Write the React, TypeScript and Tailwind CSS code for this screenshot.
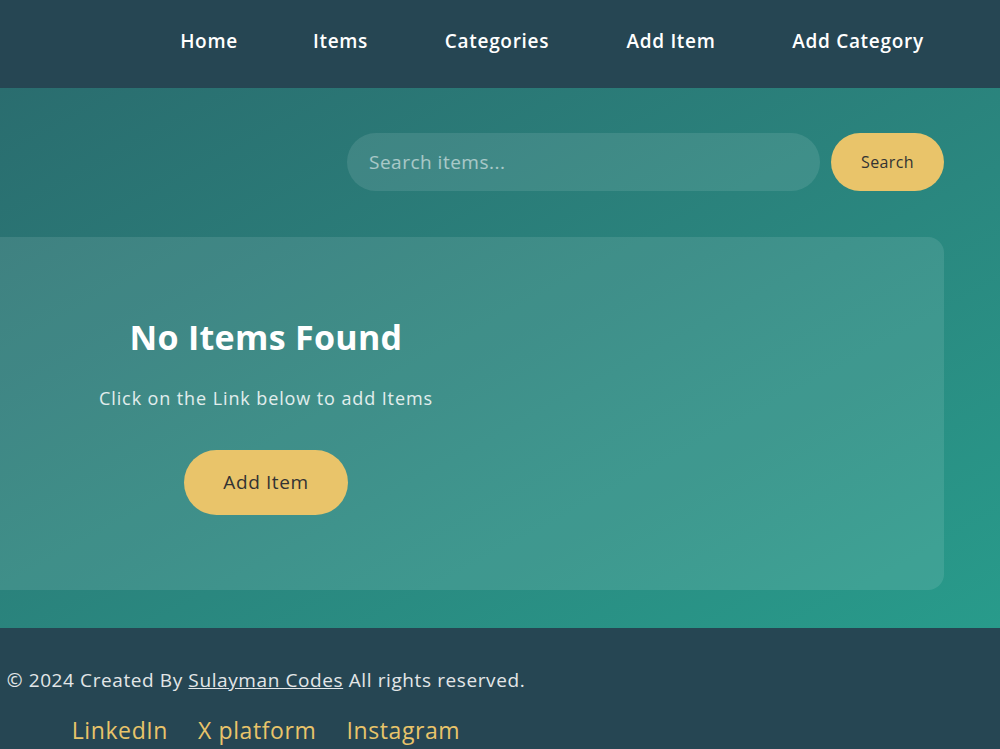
import React from "react";

const font = { fontFamily: '"Open Sans", "Noto Sans", sans-serif' };

export default function App() {
  return (
    <div className="w-[1000px] min-h-screen overflow-hidden" style={font}>
      <header className="h-[88px] bg-[#264653] flex items-center justify-end pr-[45px] pb-[6px]">
        <nav className="flex items-center">
          <a className="w-[118px] text-center text-white text-[19px] font-semibold tracking-[0.7px]">Home</a>
          <a className="w-[145px] text-center text-white text-[19px] font-semibold tracking-[0.7px]">Items</a>
          <a className="w-[168px] text-center text-white text-[19px] font-semibold tracking-[0.7px]">Categories</a>
          <a className="w-[180px] text-center text-white text-[19px] font-semibold tracking-[0.7px]">Add Item</a>
          <a className="w-[194px] text-center text-white text-[19px] font-semibold tracking-[0.7px]">Add Category</a>
        </nav>
      </header>

      <main className="h-[540px] bg-gradient-to-br from-[#2a6d6f] to-[#289b8b] pt-[45px] pr-[56px]">
        <div className="flex justify-end gap-[11px]">
          <div className="w-[473px] h-[58px] rounded-full bg-white/10 flex items-center pl-[22px] text-[19px] tracking-[0.5px] text-white/55">
            Search items...
          </div>
          <button className="w-[113px] h-[58px] rounded-full bg-[#e9c46a] text-[#333] text-[16px] tracking-[0.4px] font-medium">
            Search
          </button>
        </div>

        <div className="mt-[46px] h-[353px] rounded-r-[16px] bg-white/10 flex">
          <div className="w-[532px] flex flex-col items-center pt-[78px]">
            <h2 className="text-[34px] font-bold text-white leading-[44px] tracking-[0.3px]">No Items Found</h2>
            <p className="mt-[25px] text-[18px] tracking-[0.9px] text-white/85 leading-[28px]">Click on the Link below to add Items</p>
            <button className="mt-[38px] w-[164px] h-[65px] rounded-full bg-[#e9c46a] text-[#333] text-[19px] tracking-[0.6px]">
              Add Item
            </button>
          </div>
        </div>
      </main>

      <footer className="bg-[#264653] h-[140px] pt-[38px]">
        <div className="w-[532px] flex flex-col items-center">
          <p className="text-[19px] tracking-[0.6px] text-[#e3e6e8] leading-[28px]">
            © 2024 Created By <a className="underline">Sulayman Codes</a> All rights reserved.
          </p>
          <div className="mt-[21px] flex gap-[30px] text-[23px] tracking-[0.6px] text-[#e9c46a] leading-[30px]">
            <a>LinkedIn</a>
            <a>X platform</a>
            <a>Instagram</a>
          </div>
        </div>
      </footer>
    </div>
  );
}
